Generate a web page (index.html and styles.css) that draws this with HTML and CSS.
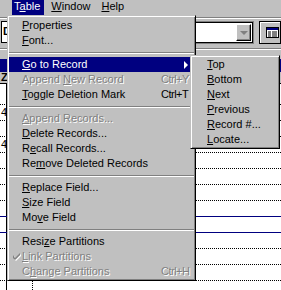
FILE: index.html
```html
<!DOCTYPE html>
<html lang="en">
<head>
    <meta charset="UTF-8">
    <title>Table menu</title>
    <link rel="stylesheet" href="styles.css">
</head>
<body>
<div class="menubar">
    <span class="mb-item active">T<u>a</u>ble</span>
    <span class="mb-item"><u>W</u>indow</span>
    <span class="mb-item"><u>H</u>elp</span>
</div>
<div class="toolbar">
    <div class="tb-left"><span>D</span></div>
    <div class="combo">
        <div class="combo-btn"><span class="down"></span></div>
    </div>
    <div class="tb-btn">
        <svg width="13" height="11" viewBox="0 0 13 11">
            <rect x="0.5" y="0.5" width="12" height="10" fill="#fff" stroke="#000"/>
            <rect x="1" y="1" width="11" height="2" fill="#000080"/>
            <path d="M2 5h3M6 5h5M2 7h3M6 7h5M2 9h3M6 9h5" stroke="#000"/>
        </svg>
    </div>
</div>
<div class="browse">
    <div class="caption"></div>
    <div class="head"><span>Zl</span></div>
    <div class="grid">
        <div class="row first"><span class="c1"></span><span class="c2"></span></div>
        <div class="row"><span class="c1">4</span><span class="c2"></span></div>
        <div class="row"><span class="c1"></span><span class="c2"></span></div>
        <div class="row"><span class="c1">4</span><span class="c2"></span></div>
        <div class="row"><span class="c1"></span><span class="c2"></span></div>
        <div class="row"><span class="c1"></span><span class="c2"></span></div>
        <div class="row"><span class="c1"></span><span class="c2"></span></div>
        <div class="row"><span class="c1"></span><span class="c2"></span></div>
        <div class="row cur"><span class="c1"></span><span class="c2"></span></div>
        <div class="row"><span class="c1"></span><span class="c2"></span></div>
        <div class="row"><span class="c1"></span><span class="c2"></span></div>
        <div class="row"><span class="c1"></span><span class="c2"></span></div>
        <div class="row"><span class="c1"></span><span class="c2"></span></div>
    </div>
</div>

<div class="menu">
    <div class="item"><span class="lbl"><u>P</u>roperties</span></div>
    <div class="item"><span class="lbl"><u>F</u>ont...</span></div>
    <div class="sep"></div>
    <div class="item sel"><span class="lbl"><u>G</u>o to Record</span><span class="arrow"></span></div>
    <div class="item off"><span class="lbl">Append <u>N</u>ew Record</span><span class="key">Ctrl+Y</span></div>
    <div class="item"><span class="lbl"><u>T</u>oggle Deletion Mark</span><span class="key">Ctrl+T</span></div>
    <div class="sep"></div>
    <div class="item off"><span class="lbl"><u>A</u>ppend Records...</span></div>
    <div class="item"><span class="lbl"><u>D</u>elete Records...</span></div>
    <div class="item"><span class="lbl">R<u>e</u>call Records...</span></div>
    <div class="item"><span class="lbl">Re<u>m</u>ove Deleted Records</span></div>
    <div class="sep"></div>
    <div class="item"><span class="lbl"><u>R</u>eplace Field...</span></div>
    <div class="item"><span class="lbl"><u>S</u>ize Field</span></div>
    <div class="item"><span class="lbl">Mo<u>v</u>e Field</span></div>
    <div class="sep"></div>
    <div class="item"><span class="lbl">Resi<u>z</u>e Partitions</span></div>
    <div class="item off">
        <svg class="check" width="7" height="7" viewBox="0 0 7 7"><path d="M0 2v3l2 2l5-5v-2l-5 5z"/></svg>
        <span class="lbl"><u>L</u>ink Partitions</span>
    </div>
    <div class="item off"><span class="lbl">C<u>h</u>ange Partitions</span><span class="key">Ctrl+H</span></div>
</div>

<div class="submenu">
    <div class="item"><span class="lbl"><u>T</u>op</span></div>
    <div class="item"><span class="lbl"><u>B</u>ottom</span></div>
    <div class="item"><span class="lbl"><u>N</u>ext</span></div>
    <div class="item"><span class="lbl"><u>P</u>revious</span></div>
    <div class="item"><span class="lbl"><u>R</u>ecord #...</span></div>
    <div class="item"><span class="lbl"><u>L</u>ocate...</span></div>
</div>
</body>
</html>
```

FILE: styles.css
```css
* {
    margin: 0;
    padding: 0;
    box-sizing: border-box;
}
body {
    width: 281px;
    height: 290px;
    overflow: hidden;
    position: relative;
    background-color: #c0c0c0;
    font: 11px "Liberation Sans", Arial, sans-serif;
    color: #000;
}
u {
    text-underline-offset: 1px;
}

/* menu bar */
.menubar {
    height: 15px;
    display: flex;
    padding-left: 12px;
    line-height: 13px;
}
.mb-item {
    height: 15px;
    padding: 0 4px 0 2px;
    margin-right: 5px;
}
.mb-item.active {
    background-color: #000080;
    color: #fff;
}

/* toolbar */
.toolbar {
    height: 33px;
    margin-top: 2px;
    border-top: 1px solid #808080;
    border-bottom: 1px solid #fff;
    box-shadow: inset 0 1px #fff, inset 0 -1px #808080;
    display: flex;
    align-items: flex-start;
}
.tb-left {
    width: 40px;
    height: 22px;
    margin: 3px 0 0 1px;
    border: 1px solid #000;
    background-color: #fff;
    font-weight: bold;
    line-height: 19px;
    padding-left: 1px;
}
.combo {
    width: 107px;
    height: 21px;
    margin: 4px 0 0 108px;
    border: 1px solid #000;
    box-shadow: 0 0 0 1px #808080;
    background-color: #fff;
    display: flex;
    justify-content: flex-end;
    padding: 1px;
}
.combo-btn {
    width: 15px;
    height: 17px;
    background-color: #c0c0c0;
    border: 1px solid;
    border-color: #fff #000 #000 #fff;
    box-shadow: inset -1px -1px #808080;
    display: flex;
    align-items: center;
    justify-content: center;
}
.down {
    width: 0;
    height: 0;
    border-top: 4px solid #808080;
    border-left: 4px solid transparent;
    border-right: 4px solid transparent;
}
.tb-btn {
    width: 22px;
    height: 23px;
    margin: 3px 0 0 6px;
    border: 1px solid #000;
    box-shadow: inset 1px 1px #fff;
    display: flex;
    align-items: center;
    padding-left: 6px;
}

/* browse window behind the menu */
.browse {
    display: flex;
    flex-direction: column;
}
.caption {
    height: 13px;
    margin-top: 9px;
    background-color: #000080;
}
.head {
    height: 12px;
    border-bottom: 1px solid #000;
    font-weight: bold;
    line-height: 11px;
    padding-left: 1px;
}
.grid {
    background-color: #fff;
}
.row {
    height: 16px;
    border-bottom: 1px dotted #000;
    display: flex;
}
.row.first {
    height: 21px;
}
.row.cur {
    border-top: 1px solid #000080;
    border-bottom-color: #000080;
    border-bottom-style: solid;
    height: 17px;
    margin-top: -1px;
}
.c1 {
    width: 7px;
    border-right: 1px solid #000;
    line-height: 15px;
    padding-left: 1px;
}
.c2 {
    width: 26px;
    border-right: 1px dotted #000;
}

/* dropdown menus */
.menu, .submenu {
    position: absolute;
    background-color: #c0c0c0;
    border: 1px solid;
    border-color: #c0c0c0 #000 #000 #c0c0c0;
    box-shadow: inset 1px 1px #fff, inset -1px -1px #808080;
}
.menu {
    left: 7px;
    top: 15px;
    width: 189px;
    padding: 2px 1px 1px 1px;
}
.submenu {
    left: 190px;
    top: 55px;
    width: 90px;
    padding: 1px 1px 1px 1px;
}
.item {
    height: 15px;
    line-height: 15px;
    display: flex;
    position: relative;
    padding-left: 13px;
    white-space: nowrap;
}
.submenu .item {
    padding-left: 15px;
}
.lbl {
    width: 139px;
    flex: none;
}
.key {
    letter-spacing: -0.5px;
}
.item.sel {
    background-color: #000080;
    color: #fff;
}
.item.off {
    color: #808080;
    text-shadow: 1px 1px 0 #fff;
}
.arrow {
    position: absolute;
    right: 6px;
    top: 4px;
    width: 0;
    height: 0;
    border-left: 4px solid #fff;
    border-top: 4px solid transparent;
    border-bottom: 4px solid transparent;
}
.check {
    position: absolute;
    left: 4px;
    top: 4px;
    fill: #808080;
    filter: drop-shadow(1px 1px 0 #fff);
}
.sep {
    height: 9px;
    padding-top: 4px;
}
.sep::before {
    content: "";
    display: block;
    border-top: 1px solid #808080;
    border-bottom: 1px solid #fff;
}
```
